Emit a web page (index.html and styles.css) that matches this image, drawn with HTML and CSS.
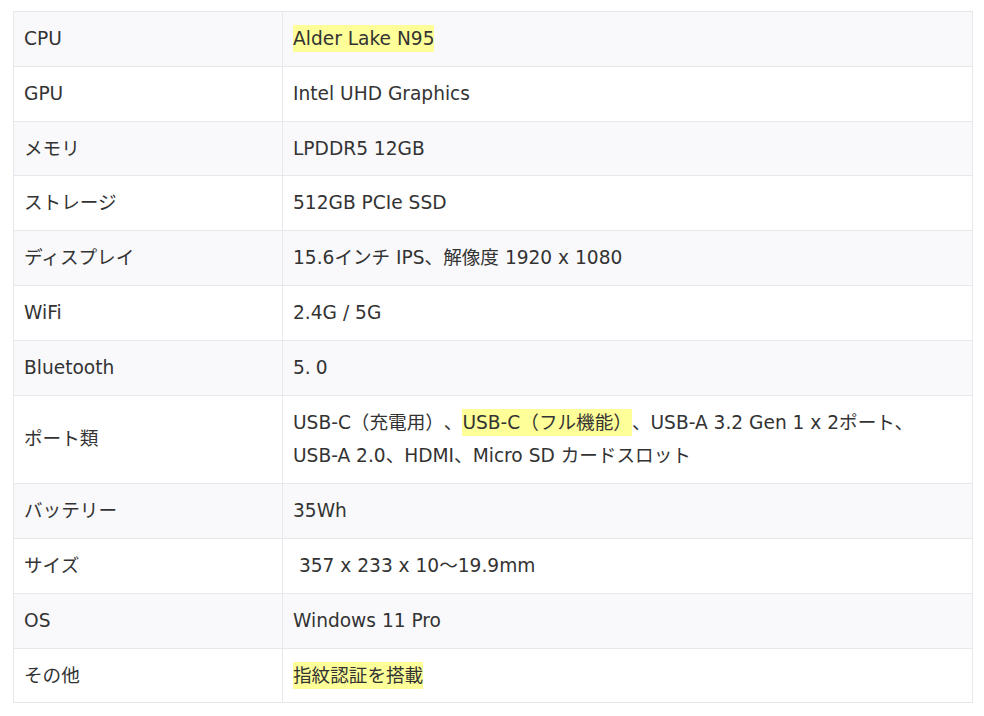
FILE: index.html
```html
<!DOCTYPE html>
<html lang="ja">
<head>
<meta charset="utf-8">
<link rel="stylesheet" href="styles.css">
</head>
<body>
<div class="wrap">
<table class="spec">
<colgroup><col class="c1"><col class="c2"></colgroup>
<tbody>
<tr><td>CPU</td><td><span class="mark">Alder Lake N95</span></td></tr>
<tr><td>GPU</td><td>Intel UHD Graphics</td></tr>
<tr><td>メモリ</td><td>LPDDR5 12GB</td></tr>
<tr><td>ストレージ</td><td>512GB PCIe SSD</td></tr>
<tr><td>ディスプレイ</td><td>15.6インチ IPS、解像度 1920 x 1080</td></tr>
<tr><td>WiFi</td><td>2.4G / 5G</td></tr>
<tr><td>Bluetooth</td><td>5.<span class="gap"></span>0</td></tr>
<tr><td>ポート類</td><td>USB-C（充電用）、<span class="mark">USB-C（フル機能）</span>、USB-A 3.2 Gen 1 x 2ポート、<span class="nw">USB-A 2.0</span>、HDMI、Micro SD カードスロット</td></tr>
<tr><td>バッテリー</td><td>35Wh</td></tr>
<tr><td>サイズ</td><td>&nbsp;357 x 233 x 10～19.9mm</td></tr>
<tr><td>OS</td><td>Windows 11 Pro</td></tr>
<tr><td>その他</td><td><span class="mark">指紋認証を搭載</span></td></tr>
</tbody>
</table>
</div>
</body>
</html>
```
FILE: styles.css
```css
html, body {
  margin: 0;
  padding: 0;
  background: #ffffff;
}
.wrap {
  padding: 11px 12px 0 13px;
}
.spec {
  width: 959px;
  table-layout: fixed;
  border-collapse: collapse;
  font-family: "DejaVu Sans", "Noto Sans CJK JP", sans-serif;
  font-size: 18.6px;
  line-height: 33.8px;
  color: #333333;
  text-spacing-trim: space-all;
}
.c1 { width: 269px; }
.c2 { width: 690px; }
.spec td {
  border: 1px solid #e8e8ec;
  padding: 10px 10px;
  vertical-align: middle;
}
.spec tr:nth-child(odd) td {
  background: #f9f9fb;
}
.mark {
  background: #ffff99;
  padding: 3px 0 3px;
}
.nw {
  white-space: nowrap;
}
.gap {
  display: inline-block;
  width: 5px;
}
```
